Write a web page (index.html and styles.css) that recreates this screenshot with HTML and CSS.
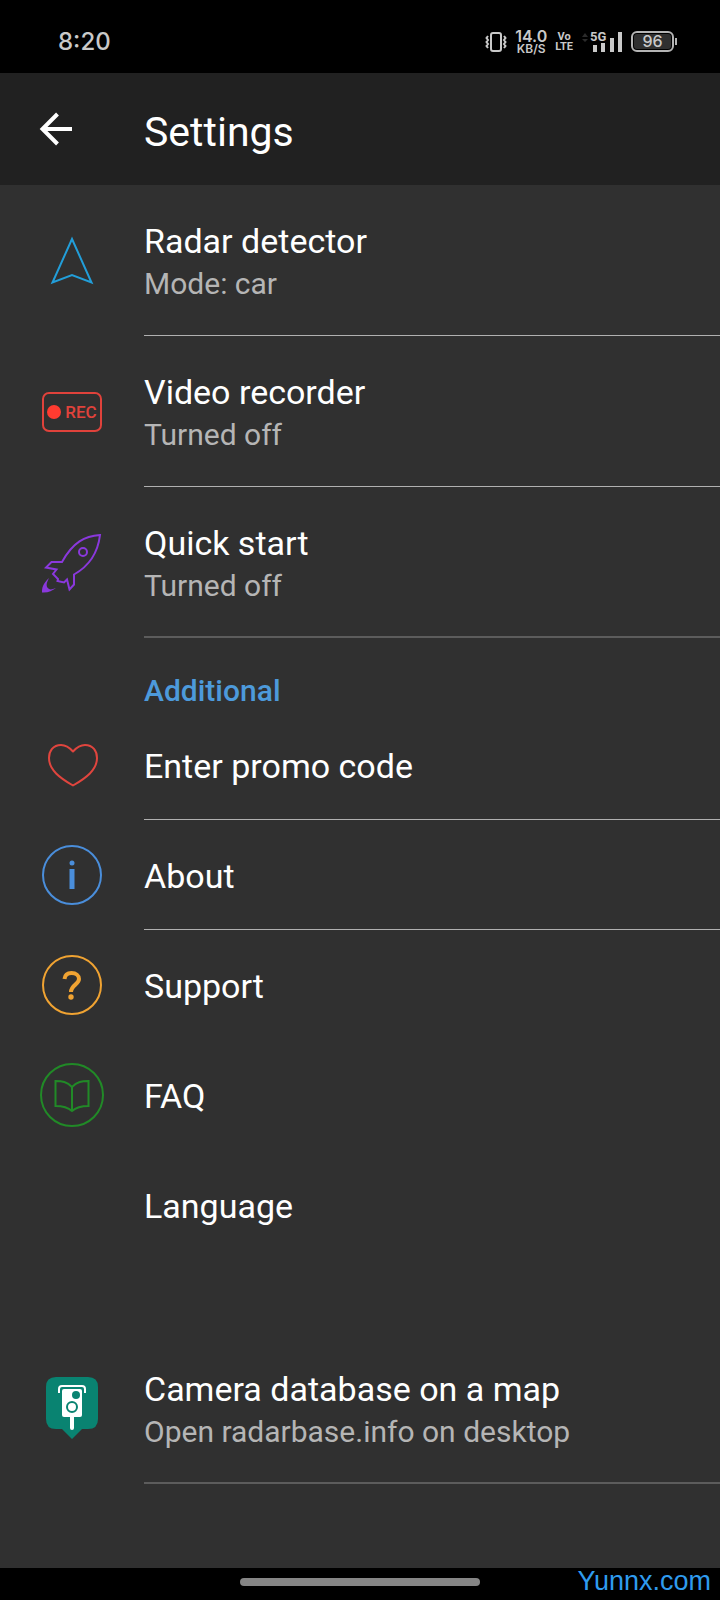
FILE: index.html
```html
<!DOCTYPE html>
<html lang="en">
<head>
<meta charset="utf-8">
<meta name="viewport" content="width=device-width, initial-scale=1">
<title>Settings</title>
<link rel="stylesheet" href="styles.css">
</head>
<body>
<div class="status">
  <time class="clock">8:20</time>
  <div class="indicators">
    <svg class="vibrate" width="22" height="20" viewBox="0 0 22 20" fill="none" stroke="currentColor">
      <rect x="6" y="1" width="10" height="18" rx="2" stroke-width="2"/>
      <path d="M3 4 1.500 6 3 8 1.500 10 3 12 1.500 14 3 16M19 4l1.500 2L19 8l1.500 2-1.500 2 1.500 2-1.500 2" stroke-width="2"/>
    </svg>
    <div class="speed"><span class="rate">14.0</span><span class="unit">KB/S</span></div>
    <div class="volte"><span>Vo</span><span>LTE</span></div>
    <div class="signal">
      <span class="network">5G</span>
      <svg width="42" height="22" viewBox="0 0 42 22" fill="currentColor">
        <path d="M1 6l3-4 3 4zM1 8l3 3 3-3z" fill="#2b2b2b"/>
        <path d="M12 14h4v7h-4zM20 12h4v9h-4zM29 7h4v14h-4zM37 1h4v20h-4z"/>
      </svg>
    </div>
    <div class="battery"><span class="level">96</span></div>
  </div>
</div>
<header class="appbar">
  <button class="back" type="button" aria-label="Back">
    <svg width="34" height="34" viewBox="0 0 34 34" fill="none" stroke="currentColor" stroke-width="4"><path d="M33 17H4M18.500 2 3.500 17l15 15"/></svg>
  </button>
  <h1 class="heading">Settings</h1>
</header>
<main class="content">
  <a class="row" href="#radar">
    <span class="icon"><svg width="44" height="52" viewBox="0 0 44 52" fill="none" stroke="#229ed9" stroke-width="2"><path d="M22 4 41.500 47.500 22 40 2.500 47.500z"/></svg></span>
    <span class="body"><span class="title">Radar detector</span><span class="note">Mode: car</span></span>
  </a>
  <a class="row" href="#video">
    <span class="icon"><span class="rec">REC</span></span>
    <span class="body"><span class="title">Video recorder</span><span class="note">Turned off</span></span>
  </a>
  <a class="row last" href="#quick">
    <span class="icon"><svg width="60" height="60" viewBox="0 0 60 60" fill="none" stroke="#8a38dc" stroke-width="2">
      <path d="M58 2C43 3 31 9 20 29H9.500L4 34.500 14.500 36.500 11 41 16 46 15.500 48 22 49.500 25 46.500 27.500 56.500 32 51.500V41.500C49 32 56 19 58 2z"/>
      <circle cx="41" cy="19" r="4"/>
      <path d="M7 45C1 51 0 54 0 59.500 6 60 10 58 14 55 9 57 7 57 5 54 4 51 5 49 7 45z" fill="#8a38dc" stroke="none"/>
    </svg></span>
    <span class="body"><span class="title">Quick start</span><span class="note">Turned off</span></span>
  </a>
  <h2 class="section">Additional</h2>
  <a class="row" href="#promo">
    <span class="icon"><svg width="52" height="44" viewBox="0 0 52 44" fill="none" stroke="#e0453e" stroke-width="2" stroke-linejoin="round"><path d="M27 8.500C23 4 19 2 15 2 7 2 3 8 3 15c0 12 11 20 24 27.500C40 35 51 27 51 15 51 8 47 2 39 2 35 2 31 4 27 8.500z"/></svg></span>
    <span class="body"><span class="title">Enter promo code</span></span>
  </a>
  <a class="row" href="#about">
    <span class="icon"><svg width="60" height="60" viewBox="0 0 60 60" fill="none" stroke="#4a8edb" stroke-width="2"><circle cx="30" cy="30" r="29"/><path d="M30 24v20" stroke-width="5"/><circle cx="30" cy="18" r="2.500" fill="#4a8edb" stroke="none"/></svg></span>
    <span class="body"><span class="title">About</span></span>
  </a>
  <a class="row plain" href="#support">
    <span class="icon"><svg width="60" height="60" viewBox="0 0 60 60" fill="none" stroke="#f0a332" stroke-width="2"><circle cx="30" cy="30" r="29"/><path d="M22.500 24C23 19.500 26 18 29.500 18c4.500 0 7.500 2.500 7.500 6 0 5.500-8 6-8 13" stroke-width="4"/><circle cx="29" cy="42" r="2.700" fill="#f0a332" stroke="none"/></svg></span>
    <span class="body"><span class="title">Support</span></span>
  </a>
  <a class="row plain" href="#faq">
    <span class="icon"><svg width="64" height="64" viewBox="0 0 64 64" fill="none" stroke="#218a27" stroke-width="2"><circle cx="32" cy="32" r="31"/><path d="M32 24C27 18.500 22 18 15.500 18v25C22 43 27 43.500 32 48c5-4.500 10-5 16.500-5V18C42 18 37 18.500 32 24zM32 24v24"/></svg></span>
    <span class="body"><span class="title">FAQ</span></span>
  </a>
  <a class="row plain" href="#language">
    <span class="icon"></span>
    <span class="body"><span class="title">Language</span></span>
  </a>
  <a class="row last spaced" href="#map">
    <span class="icon"><svg width="54" height="66" viewBox="0 0 54 66">
      <path d="M11 1h32q10 0 10 10v32q0 10-10 10h-6L27 63 17 53h-6Q1 53 1 43V11Q1 1 11 1z" fill="#098371"/>
      <path d="M14 17v-4q0-3 3-3h20q3 0 3 3v4" fill="none" stroke="#fff" stroke-width="2"/>
      <rect x="17" y="13" width="20" height="28" rx="2" fill="#fff"/>
      <path d="M27 40v12" stroke="#fff" stroke-width="4" stroke-linecap="round"/>
      <circle cx="31" cy="19" r="4" fill="#098371"/>
      <circle cx="27" cy="31" r="5" fill="none" stroke="#098371" stroke-width="2"/>
    </svg></span>
    <span class="body"><span class="title">Camera database on a map</span><span class="note">Open radarbase.info on desktop</span></span>
  </a>
</main>
<footer class="navbar">
  <span class="handle"></span>
  <span class="mark">Yunnx.com</span>
</footer>
</body>
</html>
```
FILE: styles.css
```css
* { box-sizing: border-box; }
body {
  margin: 0;
  min-height: 100vh;
  display: flex;
  flex-direction: column;
  background: #303030;
  color: #fff;
  font-family: Roboto, "Liberation Sans", sans-serif;
}
svg { display: block; }
.status {
  display: flex;
  align-items: center;
  justify-content: space-between;
  height: 73px;
  padding: 10px 46px 0 58px;
  background: #000;
  color: #c9c9c9;
  font-family: Inter, sans-serif;
}
.clock { font-size: 24px; line-height: 32px; font-weight: 500; }
.indicators { display: flex; align-items: center; gap: 8px; }
.speed, .volte { display: flex; flex-direction: column; align-items: center; }
.rate { font-size: 16px; line-height: 14px; font-weight: 600; }
.unit { font-size: 12px; line-height: 12px; font-weight: 600; }
.volte {
  font: 700 11px/10px Roboto, sans-serif;
}
.signal { position: relative; }
.network {
  position: absolute;
  left: 9px;
  top: 0;
  font: 700 13px/12px Roboto, sans-serif;
}
.battery {
  position: relative;
  width: 43px;
  height: 21px;
  padding: 1px;
  border: 2px solid #b4b4b4;
  border-radius: 6px;
}
.battery::after {
  content: "";
  position: absolute;
  right: -5px;
  top: 5px;
  width: 2px;
  height: 7px;
  background: #b4b4b4;
}
.level {
  display: block;
  border-radius: 3px;
  background: #303030;
  text-align: center;
  font-size: 16px;
  line-height: 15px;
  font-weight: 500;
}
.appbar {
  display: flex;
  align-items: center;
  height: 112px;
  background: #212121;
}
.back {
  width: 144px;
  padding: 0 0 0 39px;
  border: 0;
  background: none;
  color: #fff;
}
.heading { margin: 5px 0 0; font-size: 41px; line-height: 48px; font-weight: 400; }
.content { flex: 1; padding-bottom: 84px; }
.row {
  display: flex;
  color: inherit;
  text-decoration: none;
}
.icon {
  flex: none;
  display: flex;
  align-items: center;
  justify-content: center;
  width: 144px;
}
.body {
  flex: 1;
  display: flex;
  flex-direction: column;
  padding: 36px 0 33px;
  border-bottom: 1px solid #b0b0b0;
}
.body:has(.note) { padding-bottom: 28px; }
.plain .body { border-color: transparent; }
.last .body:has(.note) { padding-bottom: 27px; border-bottom: 2px solid #5c5c5c; }
.spaced { margin-top: 73px; }
.title { font-size: 34px; line-height: 40px; }
.note { font-size: 30px; line-height: 46px; color: #b5b5b5; }
.section {
  margin: 0;
  padding: 35px 0 1px 144px;
  color: #4d9adb;
  font-size: 30px;
  line-height: 36px;
  font-weight: 500;
}
.rec {
  display: flex;
  align-items: center;
  justify-content: center;
  gap: 4px;
  width: 60px;
  height: 40px;
  border: 2px solid #e0423b;
  border-radius: 7px;
  color: #e0423b;
  font-size: 17px;
  font-weight: 500;
}
.rec::before {
  content: "";
  width: 14px;
  height: 14px;
  border-radius: 50%;
  background: #ff3b30;
}
.navbar {
  position: relative;
  display: flex;
  justify-content: center;
  height: 32px;
  padding-top: 10px;
  background: #000;
}
.handle { width: 240px; height: 8px; border-radius: 4px; background: #858585; }
.mark {
  position: absolute;
  right: 9px;
  top: 0;
  color: #2f9bee;
  font: 27px/26px "Liberation Sans", Arial, sans-serif;
}
```
